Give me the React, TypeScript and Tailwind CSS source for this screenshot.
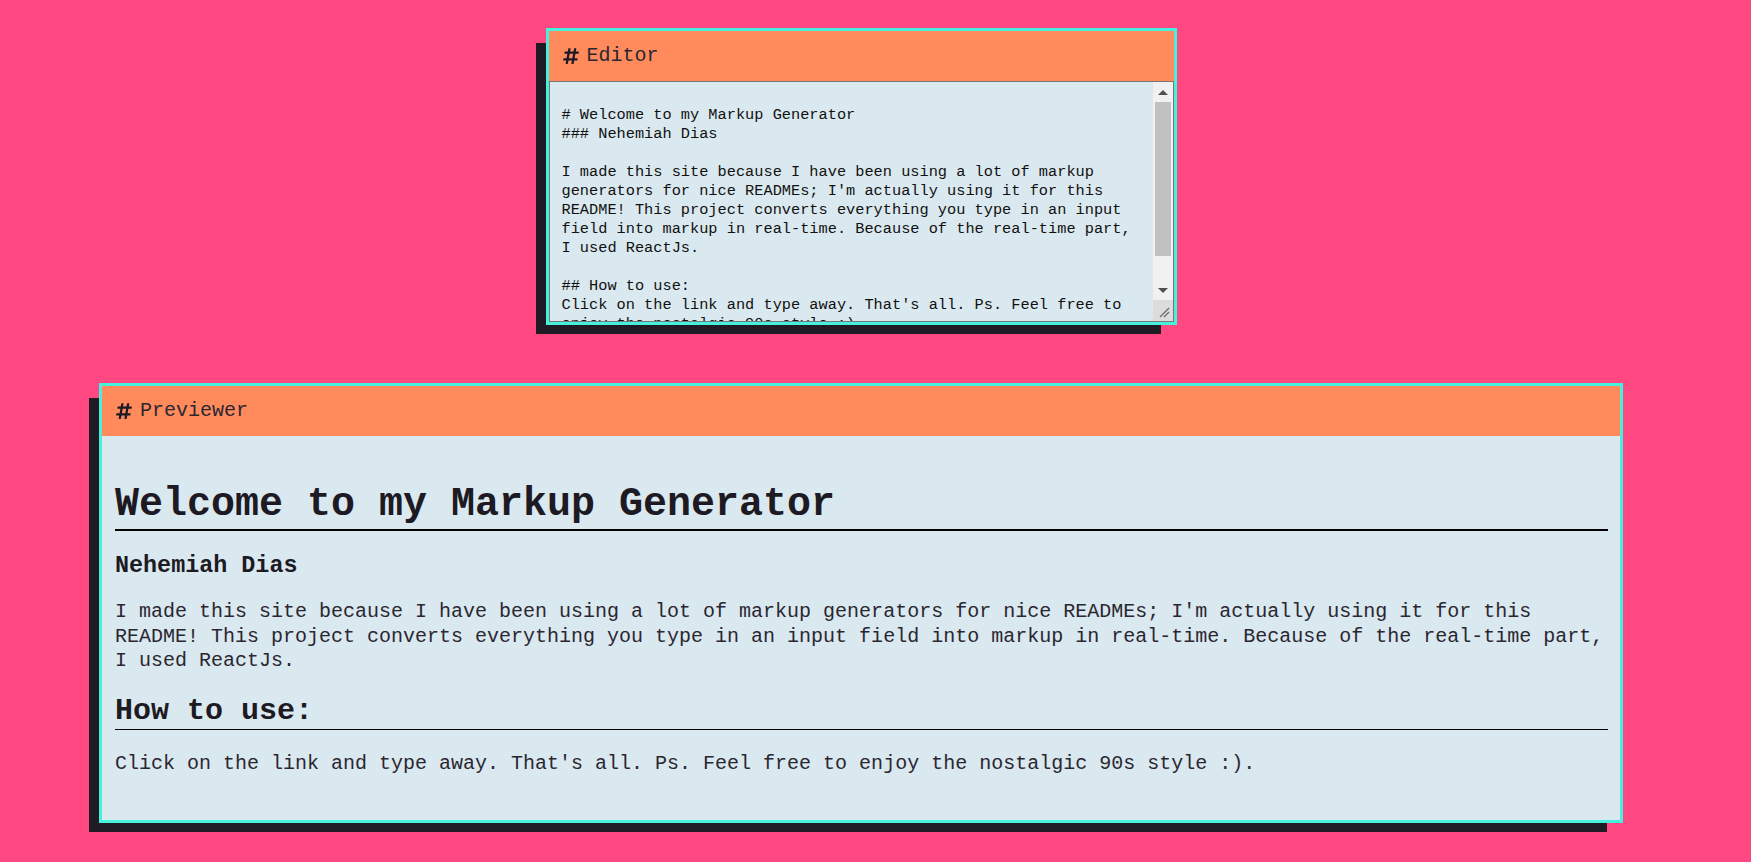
import { FaHashtag } from "react-icons/fa";

const markdown = `# Welcome to my Markup Generator
### Nehemiah Dias

I made this site because I have been using a lot of markup generators for nice READMEs; I'm actually using it for this README! This project converts everything you type in an input field into markup in real-time. Because of the real-time part, I used ReactJs.

## How to use:
Click on the link and type away. That's all. Ps. Feel free to enjoy the nostalgic 90s style :).`;

function PanelHeader({ title }: { title: string }) {
  return (
    <div className="h-[50px] flex items-center pl-[13px] bg-[#ff8a5c]">
      <FaHashtag className="w-[18px] h-[18px] text-[#1d1a23]" />
      <span className="ml-[7px] text-[20px] text-[#2b2731]">{title}</span>
    </div>
  );
}

function ScrollBar() {
  return (
    <div className="w-[20px] flex flex-col bg-[#f1f1f1]">
      <div className="h-[20px] flex items-center justify-center">
        <span className="w-0 h-0 border-x-[5px] border-x-transparent border-b-[5px] border-b-[#505050]" />
      </div>
      <div className="flex-1 px-[2px]">
        <div className="h-[154px] bg-[#c1c1c1]" />
      </div>
      <div className="h-[20px] flex items-center justify-center">
        <span className="w-0 h-0 border-x-[5px] border-x-transparent border-t-[5px] border-t-[#505050]" />
      </div>
      <div className="h-[21px] bg-[#dcdcdc] flex items-end justify-end p-[3px]">
        <svg width="11" height="11" viewBox="0 0 11 11" stroke="#6b6b6b" strokeWidth="1.3">
          <line x1="1" y1="10" x2="10" y2="1" />
          <line x1="5" y1="10" x2="10" y2="5" />
        </svg>
      </div>
    </div>
  );
}

export default function App() {
  return (
    <div className="min-h-screen bg-[#ff4882] pt-[28px] pb-[40px] pr-[29px] flex flex-col items-center font-['Liberation_Mono',monospace] text-[#1d1a23]">
      <div className="w-[631px] border-[3px] border-[#45f0dc] shadow-[-13px_12px_0_-3px_#1f1a24]">
        <PanelHeader title="Editor" />
        <div className="flex h-[241px] border border-[#767676] bg-[#dae8ef]">
          <textarea
            defaultValue={markdown}
            spellCheck={false}
            className="flex-1 min-w-0 h-full bg-transparent pt-[24px] px-[12px] text-[15.3px] leading-[19px] text-[#111] resize-none outline-none overflow-hidden font-['Liberation_Mono',monospace]"
          />
          <ScrollBar />
        </div>
      </div>

      <div className="mt-[58px] w-[1524px] border-[3px] border-[#45f0dc] shadow-[-13px_12px_0_-3px_#1f1a24]">
        <PanelHeader title="Previewer" />
        <div className="bg-[#dae8ef] pt-[45px] pb-[43px] pl-[13px] pr-[12px]">
          <h1 className="text-[40px] leading-[48px] font-bold border-b-2 border-black mb-[21px]">
            Welcome to my Markup Generator
          </h1>
          <h3 className="text-[23.4px] leading-[28px] font-bold mb-[20px]">Nehemiah Dias</h3>
          <p className="text-[20px] leading-[24.5px] text-[#2b2731] mb-[19.5px]">
            I made this site because I have been using a lot of markup generators for nice READMEs; I'm actually using it for this README! This project converts everything you type in an input field into markup in real-time. Because of the real-time part, I used ReactJs.
          </p>
          <h2 className="text-[30px] leading-[36px] font-bold border-b border-black mb-[22px]">How to use:</h2>
          <p className="text-[20px] leading-[24.5px] text-[#2b2731]">
            Click on the link and type away. That's all. Ps. Feel free to enjoy the nostalgic 90s style :).
          </p>
        </div>
      </div>
    </div>
  );
}
